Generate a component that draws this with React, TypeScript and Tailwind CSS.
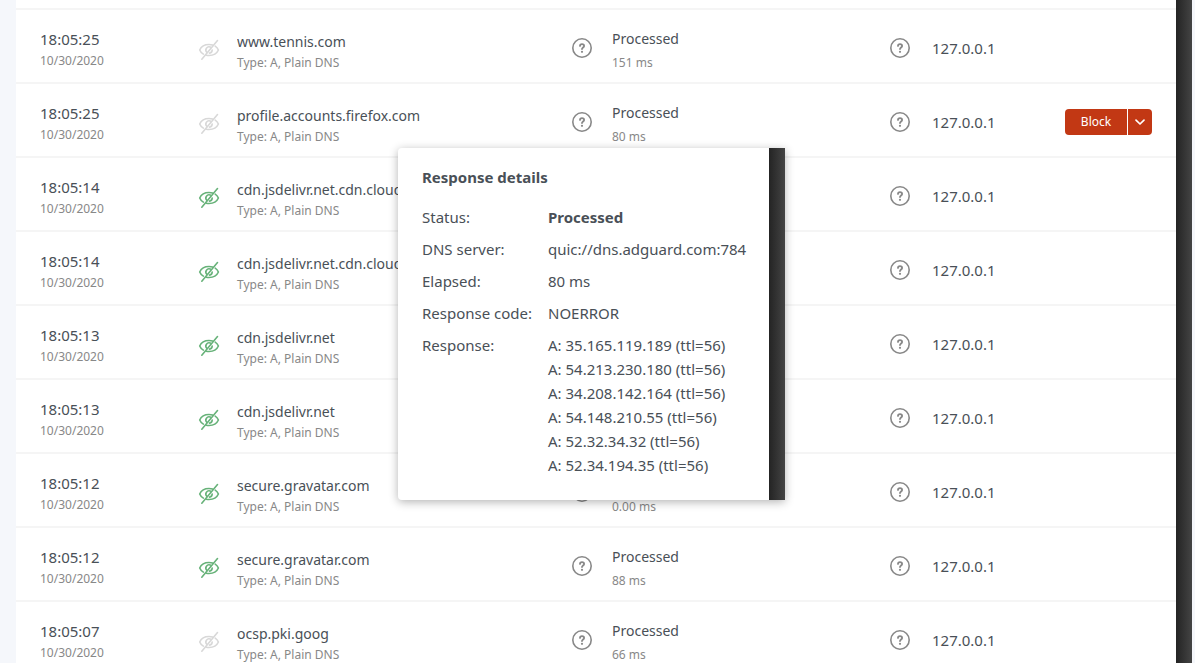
import React from 'react';
import clsx from 'clsx';

interface LogEntry {
  time: string;
  domain: string;
  elapsed: string;
  tracked?: boolean;
  active?: boolean;
}

const DATE = '10/30/2020';

const entries: LogEntry[] = [
  { time: '18:05:25', domain: 'www.tennis.com', elapsed: '151 ms' },
  { time: '18:05:25', domain: 'profile.accounts.firefox.com', elapsed: '80 ms', active: true },
  { time: '18:05:14', domain: 'cdn.jsdelivr.net.cdn.cloudflare.net', elapsed: '0.00 ms', tracked: true },
  { time: '18:05:14', domain: 'cdn.jsdelivr.net.cdn.cloudflare.net', elapsed: '0.00 ms', tracked: true },
  { time: '18:05:13', domain: 'cdn.jsdelivr.net', elapsed: '0.00 ms', tracked: true },
  { time: '18:05:13', domain: 'cdn.jsdelivr.net', elapsed: '0.00 ms', tracked: true },
  { time: '18:05:12', domain: 'secure.gravatar.com', elapsed: '0.00 ms', tracked: true },
  { time: '18:05:12', domain: 'secure.gravatar.com', elapsed: '88 ms', tracked: true },
  { time: '18:05:07', domain: 'ocsp.pki.goog', elapsed: '66 ms' },
];

const answers = [
  'A: 35.165.119.189 (ttl=56)',
  'A: 54.213.230.180 (ttl=56)',
  'A: 34.208.142.164 (ttl=56)',
  'A: 54.148.210.55 (ttl=56)',
  'A: 52.32.34.32 (ttl=56)',
  'A: 52.34.194.35 (ttl=56)',
];

function TrackerIcon({ tracked }: { tracked?: boolean }) {
  return (
    <svg
      viewBox="0 0 24 24"
      className={clsx('size-6', tracked ? 'text-[#67b279]' : 'text-[#d8d8d8]')}
      fill="none"
      stroke="currentColor"
      strokeWidth="1.6"
      strokeLinecap="round"
      strokeLinejoin="round"
    >
      <path d="M20.5 2.5 4.8 21.2" />
      <path d="M6.4 16.1C4.6 15.1 3.3 13.6 2.7 12c1.4-3.2 4.9-5.5 9.3-5.5 1.3 0 2.5.2 3.6.6" />
      <path d="M18.2 8.2c1.5 1 2.6 2.3 3.2 3.8-1.4 3.2-4.9 5.5-9.4 5.5-1 0-1.9-.1-2.8-.3" />
      <path d="M9.7 14.2a3.2 3.2 0 0 1 3.6-5.1" />
      <path d="M15.2 12a3.2 3.2 0 0 1-2.7 3.1" />
    </svg>
  );
}

function HelpIcon() {
  return (
    <svg viewBox="0 0 20 20" className="size-5" fill="none" stroke="#888" strokeLinecap="round">
      <circle cx="10" cy="10" r="9.2" strokeWidth="1.6" />
      <path d="M8 7.9C8 6.8 8.9 6.1 10 6.1s2.1.7 2.1 1.8c0 1.5-2.1 1.6-2.1 3.2" strokeWidth="1.8" />
      <circle cx="10" cy="13.8" r="1.1" fill="#888" stroke="none" />
    </svg>
  );
}

function HelpButton({ label }: { label: string }) {
  return (
    <button type="button" aria-label={label} className="block shrink-0">
      <HelpIcon />
    </button>
  );
}

// Dark strip that stands in for the scrollbar track
function ScrollTrack() {
  return <div className="w-4 shrink-0 bg-linear-to-r from-[#242424] to-[#444444]" />;
}

function ResponseDetails() {
  return (
    <div
      role="tooltip"
      className="absolute top-16 -left-[174px] z-10 flex w-[387px] overflow-hidden rounded-l bg-white whitespace-nowrap shadow-[0_2px_10px_rgba(0,0,0,0.3)]"
    >
      <div className="min-w-0 flex-1 px-6 pt-[17px] pb-[23px]">
        <h2 className="mb-4 font-bold">Response details</h2>
        <dl className="grid grid-cols-[110px_1fr] gap-x-4 gap-y-2">
          <dt>Status:</dt>
          <dd className="font-bold">Processed</dd>
          <dt>DNS server:</dt>
          <dd>quic://dns.adguard.com:784</dd>
          <dt>Elapsed:</dt>
          <dd>80 ms</dd>
          <dt>Response code:</dt>
          <dd>NOERROR</dd>
          <dt>Response:</dt>
          <dd>
            {answers.map((answer) => (
              <div key={answer}>{answer}</div>
            ))}
          </dd>
        </dl>
      </div>
      <ScrollTrack />
    </div>
  );
}

function BlockButton() {
  return (
    <div className="flex h-[26px] gap-px text-[12px] leading-6 text-white">
      <button type="button" className="w-[62px] rounded-l bg-[#c23814]">
        Block
      </button>
      <button
        type="button"
        aria-label="More actions"
        className="flex w-6 items-center justify-center rounded-r bg-[#c23814]"
      >
        <svg
          viewBox="0 0 12 12"
          className="size-3"
          fill="none"
          stroke="currentColor"
          strokeWidth="1.7"
          strokeLinecap="round"
          strokeLinejoin="round"
        >
          <path d="M2 4.2 6 8l4-3.8" />
        </svg>
      </button>
    </div>
  );
}

function Cell({ className, children }: { className: string; children: React.ReactNode }) {
  return <td className={clsx('border-b-2 border-[#f5f5f5] align-top', className)}>{children}</td>;
}

function LogRow({ entry }: { entry: LogEntry }) {
  return (
    <tr className="h-[74px]">
      <Cell className="pt-[17px] pl-6">
        <div>{entry.time}</div>
        <div className="text-[12px] leading-5 text-[#888]">{DATE}</div>
      </Cell>
      <Cell className="pt-5">
        <div className="flex gap-4">
          <div className="-ml-0.5 shrink-0 pt-2">
            <TrackerIcon tracked={entry.tracked} />
          </div>
          <div className="min-w-0 pr-4">
            <div className="truncate text-[14px]">{entry.domain}</div>
            <div className="text-[12px] leading-[18px] text-[#888]">Type: A, Plain DNS</div>
          </div>
        </div>
      </Cell>
      <Cell className="relative pt-[17px]">
        <div className="flex gap-5">
          <div className="pt-[11px]">
            <HelpButton label="Response details" />
          </div>
          <div>
            <div className="text-[14px]">Processed</div>
            <div className="text-[12px] text-[#888]">{entry.elapsed}</div>
          </div>
        </div>
        {entry.active && <ResponseDetails />}
      </Cell>
      <Cell className="pt-[25px] pr-6">
        <div className="flex h-[26px] items-center">
          <HelpButton label="Client details" />
          <span className="ml-[22px] flex-1">127.0.0.1</span>
          {entry.active && <BlockButton />}
        </div>
      </Cell>
    </tr>
  );
}

export default function App() {
  return (
    <div className="flex h-screen overflow-hidden bg-[#f5f7fb] pr-[3px] pl-4 font-['Noto_Sans',sans-serif] text-[15px] leading-6 text-[#495057]">
      <main className="min-w-0 flex-1 bg-white">
        <div className="h-2.5 border-b-2 border-[#f5f5f5]" />
        <table className="w-full table-fixed border-separate border-spacing-0">
          <colgroup>
            <col className="w-[183px]" />
            <col className="w-[373px]" />
            <col className="w-[318px]" />
            <col className="w-[286px]" />
          </colgroup>
          <tbody>
            {entries.map((entry, i) => (
              <LogRow key={i} entry={entry} />
            ))}
          </tbody>
        </table>
      </main>
      <ScrollTrack />
    </div>
  );
}
